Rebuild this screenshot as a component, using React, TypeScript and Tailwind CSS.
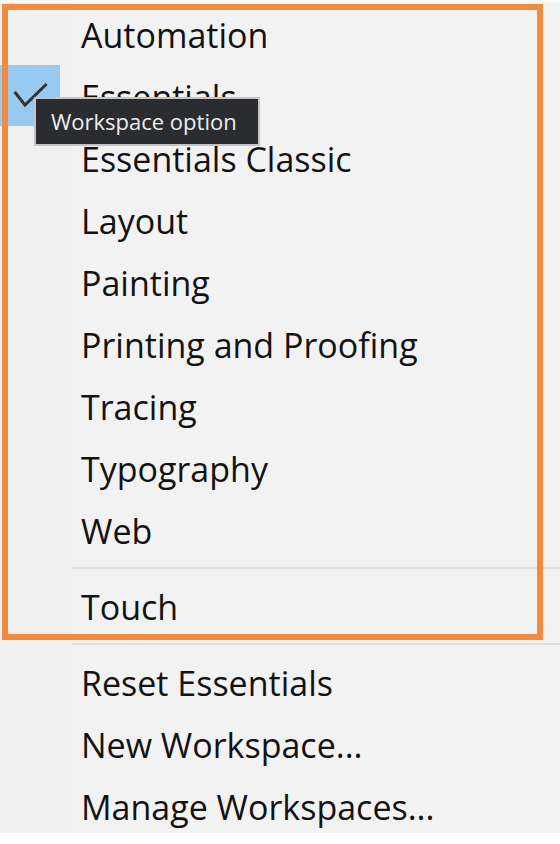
import React from 'react';

type Row = { kind: 'item'; label: string; checked?: boolean } | { kind: 'sep' };

const rows: Row[] = [
  { kind: 'item', label: 'Automation' },
  { kind: 'item', label: 'Essentials', checked: true },
  { kind: 'item', label: 'Essentials Classic' },
  { kind: 'item', label: 'Layout' },
  { kind: 'item', label: 'Painting' },
  { kind: 'item', label: 'Printing and Proofing' },
  { kind: 'item', label: 'Tracing' },
  { kind: 'item', label: 'Typography' },
  { kind: 'item', label: 'Web' },
  { kind: 'sep' },
  { kind: 'item', label: 'Touch' },
  { kind: 'sep' },
  { kind: 'item', label: 'Reset Essentials' },
  { kind: 'item', label: 'New Workspace...' },
  { kind: 'item', label: 'Manage Workspaces...' },
];

function Check() {
  return (
    <svg width="60" height="61" viewBox="0 0 60 61" className="block">
      <path d="M15.5 28 L25 40 L45.5 20" fill="none" stroke="#333333" strokeWidth="3" strokeLinecap="square" />
    </svg>
  );
}

export default function App() {
  return (
    <div className="relative w-[560px] h-[844px] bg-white overflow-hidden" style={{ fontFamily: '"Open Sans", "Noto Sans", sans-serif' }}>
      <div className="h-[833px] bg-[#f2f2f2] overflow-hidden flex flex-col">
        <div className="h-[3px] shrink-0 bg-[#f8f8f8]" />
        {rows.map((r, i) =>
          r.kind === 'sep' ? (
            <div key={i} className="flex h-[14px] shrink-0">
              <div className="w-[72px] bg-[#f0f0f0]" />
              <div className="flex-1 flex items-center">
                <div className="h-[2px] w-full bg-[#dcdcdc]" />
              </div>
            </div>
          ) : (
            <div key={i} className="flex h-[62px] shrink-0">
              <div className="w-[72px] bg-[#f0f0f0]">
                {r.checked && (
                  <div className="w-[60px] h-[61px] bg-[#99c9f1]">
                    <Check />
                  </div>
                )}
              </div>
              <div className="pl-[9px] pt-[2px] text-[34px] leading-[60px] text-[#121212] whitespace-nowrap">
                {r.label}
              </div>
            </div>
          )
        )}
      </div>

      {/* highlight frame */}
      <div className="absolute left-[2px] top-[4px] w-[541px] h-[636px] border-[6px] border-[#f28a40] pointer-events-none" />

      {/* tooltip */}
      <div className="absolute left-[34px] top-[97px] w-[226px] h-[49px] border-2 border-[#c4c4c4] bg-[#2b2c30] flex items-center pl-[15px] text-[22px] text-[#ececec] whitespace-nowrap">
        Workspace option
      </div>
    </div>
  );
}
